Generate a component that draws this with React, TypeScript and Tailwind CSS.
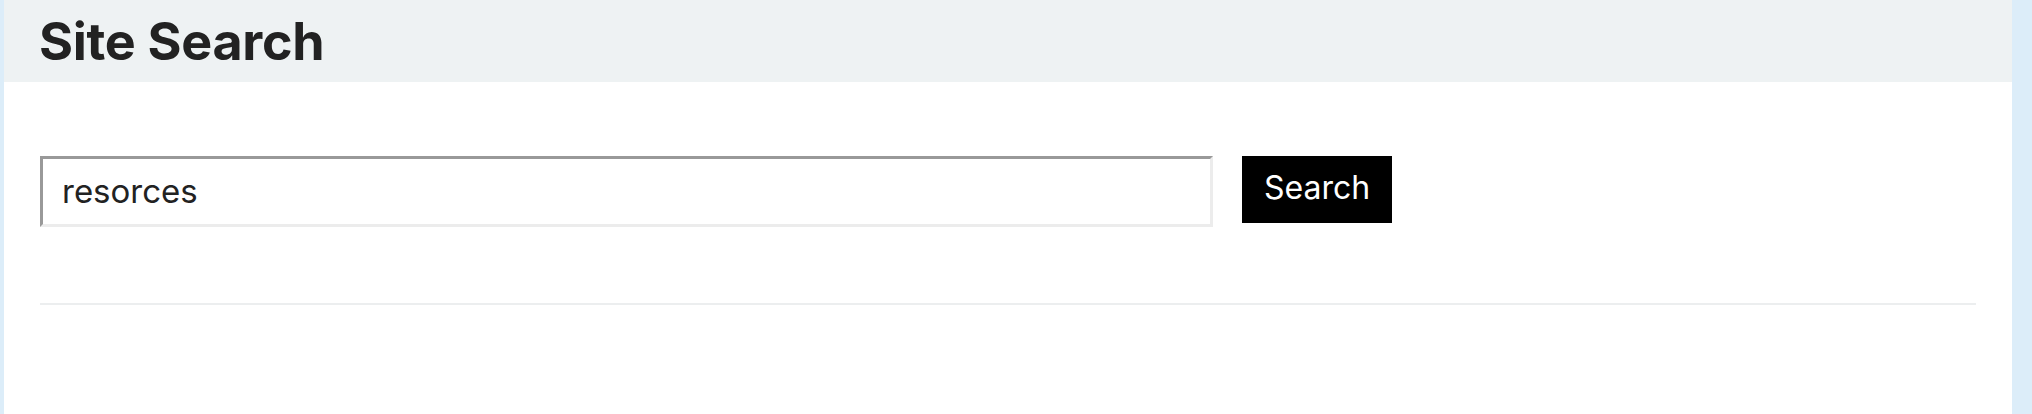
export default function App() {
  return (
    <div className="min-h-[414px] bg-[#dcedf9] pl-[4px] pr-[20px] font-['Inter',sans-serif]">
      <div className="min-h-[414px] bg-white">
        <div className="h-[82px] bg-[#eef2f3] px-[35px] pt-[10px]">
          <h1 className="text-[52px] font-bold leading-[64px] tracking-[-0.3px] text-[#222]">Site Search</h1>
        </div>
        <div className="px-[36px] pt-[74px]">
          <form className="flex items-start gap-[29px]" onSubmit={(e) => e.preventDefault()}>
            <input
              type="text"
              defaultValue="resorces"
              className="h-[71px] w-[1173px] border-[3px] border-t-[#999] border-l-[#999] border-b-[#ececec] border-r-[#ececec] px-[19px] pb-[2px] text-[33px] text-[#222] outline-none"
            />
            <button type="submit" className="h-[67px] w-[150px] bg-black pb-[3px] text-[32px] text-white">
              Search
            </button>
          </form>
          <div className="mt-[76px] h-[2px] bg-[#eceeef]" />
        </div>
      </div>
    </div>
  );
}
